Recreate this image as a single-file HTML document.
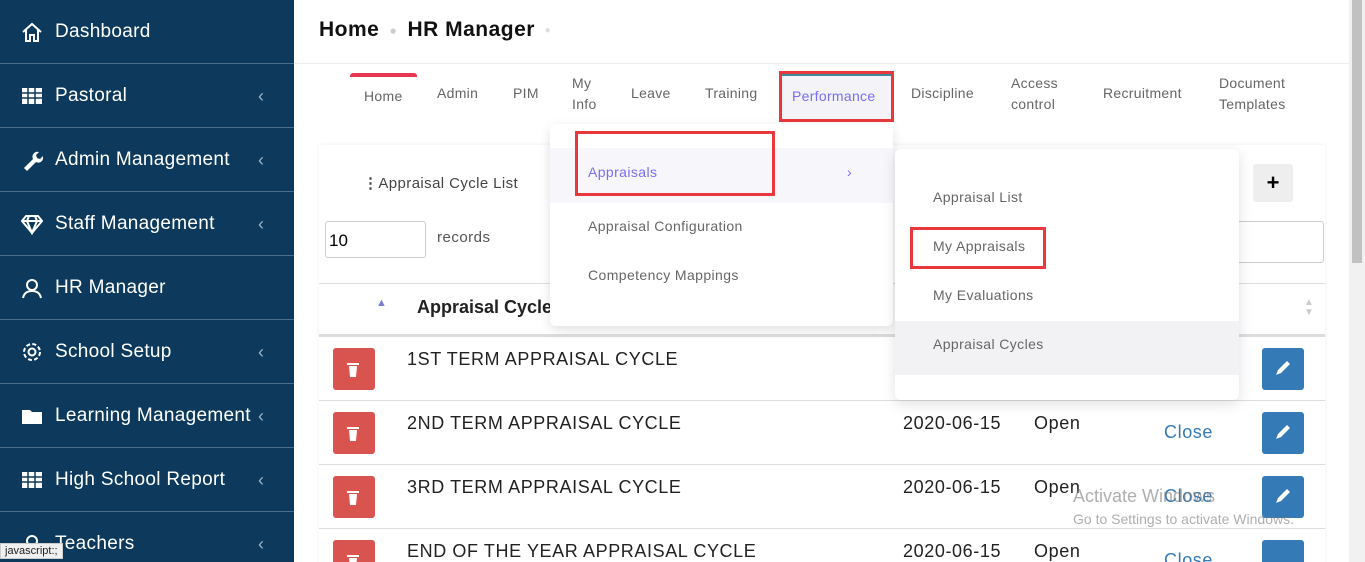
<!DOCTYPE html>
<html style="overflow:hidden;width:1365px;height:562px"><head><style>
*{box-sizing:border-box;margin:0;padding:0}
body{width:1365px;height:562px;overflow:hidden;background:#fff;font-family:"Liberation Sans",sans-serif;position:relative}
.sb{position:absolute;left:0;top:0;width:294px;height:562px;background:#0d3a5c;overflow:hidden}
.it{position:absolute;left:0;width:294px;height:64px;border-bottom:1px solid #4a6d88;color:#fff;font-size:19px;letter-spacing:.3px}
.it .t{position:absolute;left:55px;top:21px}
.it .ic{position:absolute;left:21px;top:21px;width:22px;height:22px}
.it .ch{position:absolute;left:258px;top:22px;color:#9fb2c2;font-size:18px}
.a{position:absolute}
.sc{position:absolute;left:1349px;top:0;width:16px;height:562px;background:#f1f1f1}
.nav{position:absolute;top:86px;font-size:14px;color:#666;line-height:21px;letter-spacing:.3px}
.row{position:absolute;left:319px;width:1006px;height:64px;border-top:1px solid #ddd;font-size:18px;color:#222;letter-spacing:.6px}
.del{position:absolute;left:14px;top:11px;width:42px;height:42px;background:#d9534f;border-radius:3px}
.ed{position:absolute;left:943px;top:11px;width:42px;height:42px;background:#337ab7;border-radius:3px}
.red{position:absolute;border:3px solid #e8383d}
.dd{font-size:14px;color:#666;position:absolute;letter-spacing:.4px}
.clip{position:absolute;left:0;top:0;width:1365px;height:562px;overflow:hidden}
</style></head><body><div class="clip">
<div class="sb">
<div class="it" style="top:0"><svg class="ic" viewBox="0 0 22 22" fill="none" stroke="#fff" stroke-width="2"><path d="M2 11L11 3l9 8M5 9v11h4v-6h4v6h4V9"/></svg><span class="t">Dashboard</span></div>
<div class="it" style="top:64px"><svg class="ic" viewBox="0 0 22 22"><rect x="1" y="3" width="20" height="16" fill="#fff"/><path d="M1 8h20M1 13h20M7 3v16M14 3v16" stroke="#0d3a5c" stroke-width="1.5"/></svg><span class="t">Pastoral</span><span class="ch">‹</span></div>
<div class="it" style="top:128px"><svg class="ic" viewBox="0 0 22 22"><path d="M3 19l9-9a5 5 0 0 1 6-7l-3 3 1 3 3 1 3-3a5 5 0 0 1-7 6l-9 9z" fill="#fff"/></svg><span class="t">Admin Management</span><span class="ch">‹</span></div>
<div class="it" style="top:192px"><svg class="ic" viewBox="0 0 22 22" fill="none" stroke="#fff" stroke-width="2"><path d="M5 3h12l4 5-10 12L1 8zM1 8h20M8 3l-2 5 5 12 5-12-2-5"/></svg><span class="t">Staff Management</span><span class="ch">‹</span></div>
<div class="it" style="top:256px"><svg class="ic" viewBox="0 0 22 22" fill="none" stroke="#fff" stroke-width="2"><circle cx="11" cy="8" r="5"/><path d="M2 21c1-5 4-7 9-7s8 2 9 7"/></svg><span class="t">HR Manager</span></div>
<div class="it" style="top:320px"><svg class="ic" viewBox="0 0 22 22" fill="none" stroke="#fff" stroke-width="2"><circle cx="11" cy="11" r="3.5"/><circle cx="11" cy="11" r="8" stroke-dasharray="4 2.3"/></svg><span class="t">School Setup</span><span class="ch">‹</span></div>
<div class="it" style="top:384px"><svg class="ic" viewBox="0 0 22 22"><path d="M1 5h8l2 2h10v12H1z" fill="#fff"/></svg><span class="t">Learning Management</span><span class="ch">‹</span></div>
<div class="it" style="top:448px"><svg class="ic" viewBox="0 0 22 22"><rect x="1" y="3" width="20" height="16" fill="#fff"/><path d="M1 8h20M1 13h20M7 3v16M14 3v16" stroke="#0d3a5c" stroke-width="1.5"/></svg><span class="t">High School Report</span><span class="ch">‹</span></div>
<div class="it" style="top:512px"><svg class="ic" viewBox="0 0 22 22" fill="none" stroke="#fff" stroke-width="2"><circle cx="11" cy="8" r="5"/></svg><span class="t">Teachers</span><span class="ch">‹</span></div>
</div>
<div class="a" style="left:0;top:543px;background:#f0f0f0;border:1px solid #ccc;font-size:11px;padding:1px 4px;color:#222">javascript:;</div>
<div class="sc"><div style="position:absolute;left:3px;top:0;width:10px;height:263px;background:#c1c1c1"></div></div>
<div class="a" style="left:294px;top:63px;width:1055px;height:1px;background:#eee"></div>
<div class="a" style="left:319px;top:18px;font-size:21px;font-weight:bold;color:#111;letter-spacing:.5px">Home <span style="color:#ccc;font-size:12px;vertical-align:middle">&nbsp;●&nbsp;</span> HR Manager <span style="color:#ddd;font-size:10px;vertical-align:middle">&nbsp;●</span></div>
<div class="a" style="left:350px;top:73px;width:67px;height:4px;background:#e8384f;border-radius:3px 3px 0 0"></div>
<div class="nav" style="left:364px;top:86px">Home</div>
<div class="nav" style="left:437px;top:83px">Admin</div>
<div class="nav" style="left:513px;top:83px">PIM</div>
<div class="nav" style="left:572px;top:73px">My<br>Info</div>
<div class="nav" style="left:631px;top:83px">Leave</div>
<div class="nav" style="left:705px;top:83px">Training</div>
<div class="a" style="left:781px;top:73px;width:110px;height:47px;background:#f3f3f8;border-top:3px solid #3e8a9c"></div>
<div class="nav" style="left:792px;top:86px;color:#7b6cf6">Performance</div>
<div class="red" style="left:779px;top:71px;width:115px;height:51px"></div>
<div class="nav" style="left:911px;top:83px">Discipline</div>
<div class="nav" style="left:1011px;top:73px">Access<br>control</div>
<div class="nav" style="left:1103px;top:83px">Recruitment</div>
<div class="nav" style="left:1219px;top:73px">Document<br>Templates</div>
<div class="a" style="left:319px;top:145px;width:1006px;height:420px;background:#fff;box-shadow:0 0 4px #eee"></div>
<div class="a" style="left:363px;top:174px;font-size:15px;color:#444;letter-spacing:.4px"><b>⋮</b>Appraisal Cycle List</div>
<div class="a" style="left:1253px;top:164px;width:40px;height:38px;background:#eee;border-radius:3px;font-size:22px;font-weight:bold;text-align:center;line-height:38px">+</div>
<div class="a" style="left:325px;top:221px;width:101px;height:37px;border:1px solid #ccc;border-radius:3px;font-size:17px;padding:9px 3px">10</div>
<div class="a" style="left:437px;top:229px;font-size:15px;color:#555;letter-spacing:.5px">records</div>
<div class="a" style="left:1200px;top:221px;width:124px;height:42px;border:1px solid #ccc;border-radius:3px"></div>
<div class="a" style="left:319px;top:283px;width:1006px;height:53px;border-top:1px solid #ddd;border-bottom:2px solid #ddd"></div>
<div class="a" style="left:376px;top:297px;color:#7b7bd8;font-size:11px">▲</div>
<div class="a" style="left:417px;top:297px;font-size:18px;font-weight:bold;color:#222">Appraisal Cycle</div>
<div class="a" style="left:1304px;top:298px;color:#ccc;font-size:10px;line-height:10px">▲<br>▼</div>
<div class="row" style="top:336px"><div class="del"></div><span class="a" style="left:88px;top:12px">1ST TERM APPRAISAL CYCLE</span><div class="ed"></div></div>
<div class="row" style="top:400px"><div class="del"></div><span class="a" style="left:88px;top:12px">2ND TERM APPRAISAL CYCLE</span><span class="a" style="left:584px;top:12px">2020-06-15</span><span class="a" style="left:715px;top:12px">Open</span><span class="a" style="left:845px;top:21px;color:#337ab7">Close</span><div class="ed"></div></div>
<div class="row" style="top:464px"><div class="del"></div><span class="a" style="left:88px;top:12px">3RD TERM APPRAISAL CYCLE</span><span class="a" style="left:584px;top:12px">2020-06-15</span><span class="a" style="left:715px;top:12px">Open</span><span class="a" style="left:845px;top:21px;color:#337ab7">Close</span><div class="ed"></div></div>
<div class="row" style="top:528px"><div class="del"></div><span class="a" style="left:88px;top:12px">END OF THE YEAR APPRAISAL CYCLE</span><span class="a" style="left:584px;top:12px">2020-06-15</span><span class="a" style="left:715px;top:12px">Open</span><span class="a" style="left:845px;top:21px;color:#337ab7">Close</span><div class="ed"></div></div>
<svg class="a" style="left:0;top:0;pointer-events:none" width="1365" height="562">
<g fill="#fff"><path d="M347 363h12v2h-12zM349 366h8l-1 11h-6z"/><path d="M347 427h12v2h-12zM349 430h8l-1 11h-6z"/><path d="M347 491h12v2h-12zM349 494h8l-1 11h-6z"/><path d="M347 555h12v2h-12zM349 558h8l-1 11h-6z"/>
<path d="M1276 375l2-5 9-9 3 3-9 9z"/><path d="M1276 439l2-5 9-9 3 3-9 9z"/><path d="M1276 503l2-5 9-9 3 3-9 9z"/></g></svg>
<div class="a" style="left:550px;top:124px;width:343px;height:202px;background:#fff;border-radius:6px;box-shadow:0 4px 12px rgba(0,0,0,.12)"></div>
<div class="a" style="left:550px;top:148px;width:343px;height:55px;background:#f7f7fb"></div>
<div class="dd" style="left:588px;top:164px;color:#7b6cf6">Appraisals</div>
<div class="dd" style="left:847px;top:164px;color:#7b6cf6">›</div>
<div class="red" style="left:575px;top:131px;width:200px;height:65px"></div>
<div class="dd" style="left:588px;top:218px">Appraisal Configuration</div>
<div class="dd" style="left:588px;top:267px">Competency Mappings</div>
<div class="a" style="left:895px;top:149px;width:344px;height:251px;background:#fff;border-radius:6px;box-shadow:0 4px 14px rgba(0,0,0,.12)"></div>
<div class="a" style="left:895px;top:321px;width:344px;height:54px;background:#f2f2f5"></div>
<div class="dd" style="left:933px;top:189px">Appraisal List</div>
<div class="dd" style="left:933px;top:238px">My Appraisals</div>
<div class="red" style="left:910px;top:227px;width:136px;height:42px"></div>
<div class="dd" style="left:933px;top:287px">My Evaluations</div>
<div class="dd" style="left:933px;top:336px">Appraisal Cycles</div>
<div class="a" style="left:1073px;top:486px;font-size:18px;color:rgba(120,120,120,.6)">Activate Windows</div>
<div class="a" style="left:1073px;top:511px;font-size:14px;color:rgba(120,120,120,.6)">Go to Settings to activate Windows.</div>
</div></body></html>
